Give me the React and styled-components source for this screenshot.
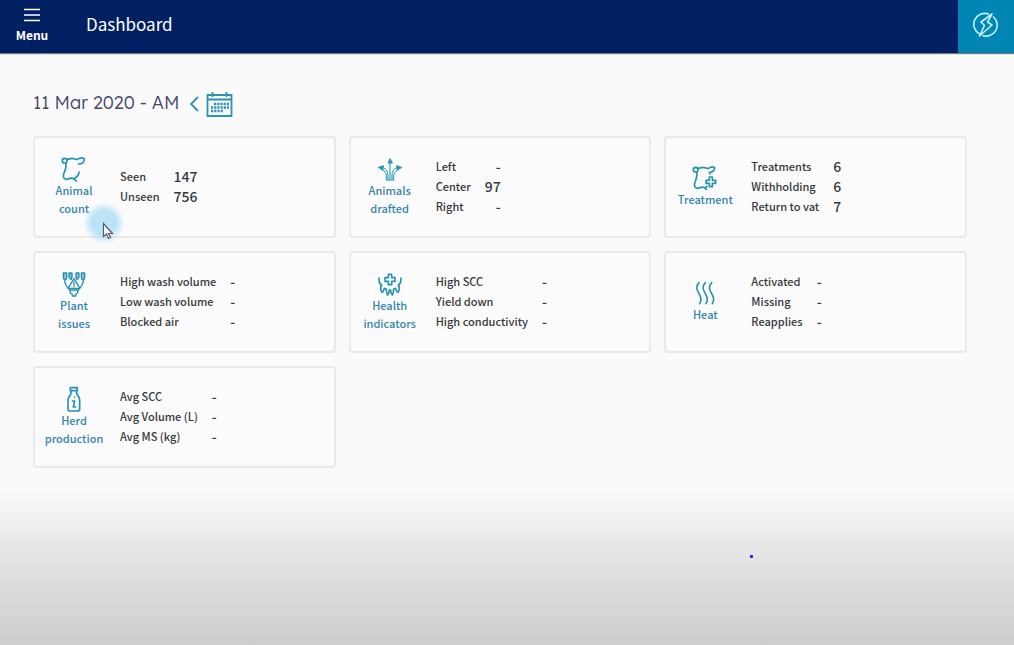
import React from "react";
import styled, { createGlobalStyle } from "styled-components";

const GlobalStyle = createGlobalStyle`
  * {
    box-sizing: border-box;
  }

  body {
    margin: 0;
    color: #38383c;
    font-family: "Noto Sans CJK SC", "Noto Sans", sans-serif;
    font-size: 12px;
  }
`;

const Page = styled.div`
  position: relative;
  min-height: 100vh;
  background: linear-gradient(#fafafa 76%, #e4e4e4 86%, #cdcdcd 100%);
`;

const Header = styled.header`
  display: flex;
  align-items: stretch;
  height: 53px;
  background: #002063;
  color: #fff;
  box-shadow: 0 1px 1px #777;
`;

const BaseButton = styled.button`
  display: flex;
  align-items: center;
  justify-content: center;
  padding: 0;
  border: 0;
  background: transparent;
  color: inherit;
  font: inherit;
  cursor: pointer;
`;

const MenuButton = styled(BaseButton)`
  flex-direction: column;
  gap: 3px;
  width: 64px;
  padding-bottom: 1px;
  font-weight: 700;
  line-height: 20px;
`;

const ActionButton = styled(BaseButton)`
  width: 56px;
  margin-left: auto;
  padding-bottom: 4px;
  background: #0085b5;
  color: #c5f0fb;
`;

const IconButton = styled(BaseButton)`
  color: #2b94b5;
`;

const Title = styled.h1`
  margin: 0 0 0 22px;
  padding-bottom: 6px;
  align-self: center;
  font-size: 17px;
  font-weight: 400;
  line-height: 24px;
`;

const Main = styled.main`
  padding: 37px 47px 40px 33px;
`;

const DateBar = styled.div`
  display: flex;
  align-items: center;
  height: 28px;
  margin-bottom: 18px;
`;

const DateText = styled.h2`
  margin: 0 10px 0 0;
  padding-bottom: 2px;
  color: #3f466b;
  font-family: Lexend, Lato, sans-serif;
  font-size: 18px;
  font-weight: 300;
  line-height: 24px;
`;

const Cards = styled.div`
  display: grid;
  grid-template-columns: repeat(3, 1fr);
  gap: 13px;
`;

const CardBox = styled.section`
  display: flex;
  align-items: center;
  min-height: 102px;
  border: 2px solid #e9e9ea;
  border-radius: 4px;
  background: #fbfbfb;
`;

const Svg = styled.svg`
  display: block;
  width: 28px;
  height: 28px;
  fill: none;
  stroke: #2493b3;
  stroke-width: 5;
  stroke-linecap: round;
  stroke-linejoin: round;
`;

const CardName = styled.h3`
  display: flex;
  flex-direction: column;
  align-items: center;
  width: 78px;
  margin: 0 7px 0 0;
  padding-bottom: 2px;
  color: #3286ac;
  font-size: 11px;
  font-weight: 500;
  line-height: 18px;
  text-align: center;

  ${Svg} {
    margin-bottom: -2px;
  }
`;

const Stats = styled.table`
  margin-bottom: 2px;
  border-collapse: collapse;
  line-height: 20px;

  th,
  td {
    height: 20px;
    padding: 0;
  }

  th {
    font-size: 11px;
    font-weight: 500;
    text-align: left;
  }

  td {
    padding-left: 14px;
    font-size: 14px;
    font-weight: 500;
    text-align: right;
  }
`;

const Glow = styled.div`
  position: absolute;
  top: 202px;
  left: 83px;
  width: 42px;
  height: 42px;
  border-radius: 50%;
  background: radial-gradient(rgba(160, 218, 245, 0.7) 40%, rgba(180, 226, 246, 0) 71%);
  pointer-events: none;
`;

const Pointer = styled.svg`
  position: absolute;
  top: 222px;
  left: 102px;
  width: 12px;
  height: 18px;
  pointer-events: none;
`;

const Dot = styled.div`
  position: absolute;
  top: 555px;
  left: 750px;
  width: 3px;
  height: 3px;
  border-radius: 1px;
  background: #1a1aff;
  pointer-events: none;
`;

const CardSvg = ({ children }) => (
  <Svg viewBox="0 0 84 84" aria-hidden="true">
    {children}
  </Svg>
);

const CowIcon = () => (
  <CardSvg>
    <circle cx="14" cy="17" r="7" />
    <path d="M20 12c5 3 9-2 16-2 8 0 11 5 17 3 5-4 14-5 20-2 0 10-7 16-18 16" />
    <path d="M17 24c4 11-1 21-5 30-4 10-2 18 7 19 8 0 11-6 19-3 5 1 6 4 11 8M57 51c0 8-5 14-14 20" />
  </CardSvg>
);

const DraftIcon = () => (
  <CardSvg>
    <path d="M42 24v50M36 74V60c0-12-7-21-19-23M48 74V60c0-12 7-21 19-23M31 74V62c0-8-4-14-12-17M53 74V62c0-8 4-14 12-17M31 75h22" strokeWidth="3" />
    <path d="M42 12l-6 12h12zM8 37l14-5-2 12zM76 37l-14-5 2 12z" fill="#2493b3" strokeWidth="3" />
  </CardSvg>
);

const TreatmentIcon = () => (
  <CardSvg>
    <circle cx="14" cy="17" r="7" />
    <path d="M20 12c5 3 9-2 16-2 8 0 11 5 17 3 5-4 13-5 18-2 0 9-7 13-16 15l2 4" />
    <path d="M17 24c4 12-1 18-4 28-4 11-4 19 5 21 9 0 12-6 20-3 4 1 5 4 9 6M48 67c-2 2-4 3-7 4" />
    <path d="M55 39h9v10h10v9H64v10h-9V58H45v-9h10z" />
  </CardSvg>
);

const PlantIcon = () => (
  <CardSvg>
    <path d="M10 9h10v13l-2 7h-6l-2-7zM27 9h9v14l-3 6-6-7zM48 9h9v13l-6 7-3-6zM64 9h10v13l-2 7h-6l-2-7z" fill="#7fc3d6" strokeWidth="4" />
    <path d="M14 30c0 14 8 23 17 32M70 30c0 14-8 23-17 32M42 26L24 55h36zM42 36v9M42 49v1" strokeWidth="4" />
    <path d="M31 60h22v9l-6 4v5H37v-5l-6-4z" strokeWidth="4" />
  </CardSvg>
);

const HealthIcon = () => (
  <CardSvg>
    <path d="M37 13h10v10h10v11H47v10H37V34H27V23h10z" />
    <path d="M9 24c-1 11 2 17 8 22M75 24c1 11-2 17-8 22" />
    <path d="M17 46c-5 7-3 15 1 21 5-2 6-7 7-12l6 3c0 7 1 12 4 17 4-4 5-9 5-15h4c0 6 1 11 5 15 3-5 4-10 4-17l6-3c1 5 2 10 7 12 4-6 6-14 1-21" />
  </CardSvg>
);

const HeatIcon = () => (
  <CardSvg>
    <path d="M24 11c-22 24 18 36 2 63M43 11c-22 24 18 36 2 63M62 11c-22 24 18 36 2 63" />
  </CardSvg>
);

const BottleIcon = () => (
  <CardSvg>
    <path d="M31 8h21v9H31zM33 17v8c0 7-9 9-9 19v28c0 4 2 6 6 6h23c4 0 6-2 6-6V44c0-10-9-12-9-19v-8" />
    <path d="M44 36v1M37 48h7l-4 18h7" />
  </CardSvg>
);

const MenuIcon = () => (
  <svg width="16" height="14" viewBox="0 0 16 14" stroke="#fff" strokeWidth="1.4" aria-hidden="true">
    <path d="M0 1.5h16M0 7h16M0 12.5h16" />
  </svg>
);

const BoltIcon = () => (
  <svg
    width="26"
    height="26"
    viewBox="0 0 26 26"
    fill="none"
    stroke="currentColor"
    strokeWidth="1.6"
    strokeLinejoin="round"
    strokeLinecap="round"
    aria-hidden="true"
  >
    <path d="M15.5 2A11 11 0 0 0 6.5 22M10 23.7A11 11 0 0 0 20.5 5" />
    <path d="M19 2L8 10l3.5 3.5L6.5 24 19 13l-4.5-3z" />
  </svg>
);

const ChevronIcon = () => (
  <svg width="17" height="28" viewBox="0 0 17 28" fill="none" stroke="currentColor" strokeWidth="1.8" aria-hidden="true">
    <path d="M9 7L2 14l7 7" />
  </svg>
);

const CalendarIcon = () => (
  <svg width="27" height="28" viewBox="0 0 27 28" fill="none" stroke="currentColor" strokeWidth="1.8" aria-hidden="true">
    <path d="M1.5 5h24v21h-24zM1.5 9.5h24M6.5 2v5M20.5 2v5" />
    <path d="M8 14h15M5 17.5h18M5 21h12" strokeWidth="2.4" strokeDasharray="2.2 1" />
  </svg>
);

const CARDS = [
  { icon: CowIcon, name: ["Animal", "count"], rows: [["Seen", "147"], ["Unseen", "756"]] },
  { icon: DraftIcon, name: ["Animals", "drafted"], rows: [["Left", "-"], ["Center", "97"], ["Right", "-"]] },
  { icon: TreatmentIcon, name: ["Treatment"], rows: [["Treatments", "6"], ["Withholding", "6"], ["Return to vat", "7"]] },
  { icon: PlantIcon, name: ["Plant", "issues"], rows: [["High wash volume", "-"], ["Low wash volume", "-"], ["Blocked air", "-"]] },
  { icon: HealthIcon, name: ["Health", "indicators"], rows: [["High SCC", "-"], ["Yield down", "-"], ["High conductivity", "-"]] },
  { icon: HeatIcon, name: ["Heat"], rows: [["Activated", "-"], ["Missing", "-"], ["Reapplies", "-"]] },
  { icon: BottleIcon, name: ["Herd", "production"], rows: [["Avg SCC", "-"], ["Avg Volume (L)", "-"], ["Avg MS (kg)", "-"]] }
];

const Card = ({ icon: Icon, name, rows }) => (
  <CardBox>
    <CardName>
      <Icon />
      {name.map(line => (
        <span key={line}>{line}</span>
      ))}
    </CardName>
    <Stats>
      <tbody>
        {rows.map(([label, value]) => (
          <tr key={label}>
            <th scope="row">{label}</th>
            <td>{value}</td>
          </tr>
        ))}
      </tbody>
    </Stats>
  </CardBox>
);

const App = () => (
  <Page>
    <GlobalStyle />
    <Header>
      <MenuButton type="button">
        <MenuIcon />
        Menu
      </MenuButton>
      <Title>Dashboard</Title>
      <ActionButton type="button" aria-label="Quick actions">
        <BoltIcon />
      </ActionButton>
    </Header>
    <Main>
      <DateBar>
        <DateText>11 Mar 2020 - AM</DateText>
        <IconButton type="button" aria-label="Previous session">
          <ChevronIcon />
        </IconButton>
        <IconButton type="button" aria-label="Choose a date">
          <CalendarIcon />
        </IconButton>
      </DateBar>
      <Cards>
        {CARDS.map(card => (
          <Card key={card.name.join(" ")} {...card} />
        ))}
      </Cards>
    </Main>
    <Glow />
    <Pointer viewBox="0 0 12 18" aria-hidden="true">
      <path d="M1.5 1.5v13l3-2.5 2 4.5 2-1-2-4h4z" fill="#fff" stroke="#555b66" strokeWidth="1.2" />
    </Pointer>
    <Dot />
  </Page>
);

export default App;
